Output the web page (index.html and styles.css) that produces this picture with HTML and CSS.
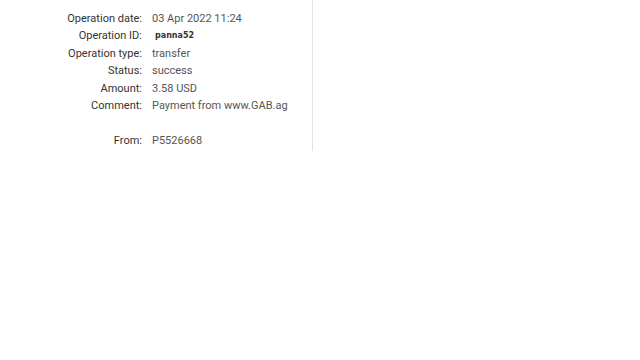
FILE: index.html
```html
<!DOCTYPE html>
<html lang="en">
<head>
<meta charset="UTF-8" />
<title>Operation details</title>
<link rel="stylesheet" href="styles.css">
</head>
<body>
<div class="panel">
  <table class="details">
    <tr><th>Operation date:</th><td>03 Apr 2022 11:24</td></tr>
    <tr><th>Operation ID:</th><td><span class="op-id">panna52</span></td></tr>
    <tr><th>Operation type:</th><td>transfer</td></tr>
    <tr><th>Status:</th><td>success</td></tr>
    <tr><th>Amount:</th><td>3.58 USD</td></tr>
    <tr><th>Comment:</th><td>Payment from www.GAB.ag</td></tr>
    <tr class="gap"><th></th><td></td></tr>
    <tr><th>From:</th><td>P5526668</td></tr>
  </table>
</div>
</body>
</html>
```

FILE: styles.css
```css
* {
  box-sizing: border-box;
}
body {
  margin: 0;
  background: #fff;
  font-family: Roboto, 'Open Sans', sans-serif;
}
.panel {
  width: 313px;
  height: 151px;
  border-right: 1px solid #e2e2e2;
  padding: 10px 0 0 0;
}
.details {
  border-collapse: collapse;
}
.details th {
  width: 152px;
  padding: 0 10px 0 0;
  text-align: right;
  font-weight: 400;
  font-size: 11px;
  color: #333;
  height: 17.4px;
  line-height: 17.4px;
}
.details td {
  padding: 0;
  font-size: 11px;
  color: #555;
  height: 17.4px;
  line-height: 17.4px;
}
.op-id {
  font-family: 'DejaVu Sans', sans-serif;
  font-size: 8px;
  font-weight: 700;
  color: #333;
  padding-left: 3px;
  vertical-align: 1px;
}
```
